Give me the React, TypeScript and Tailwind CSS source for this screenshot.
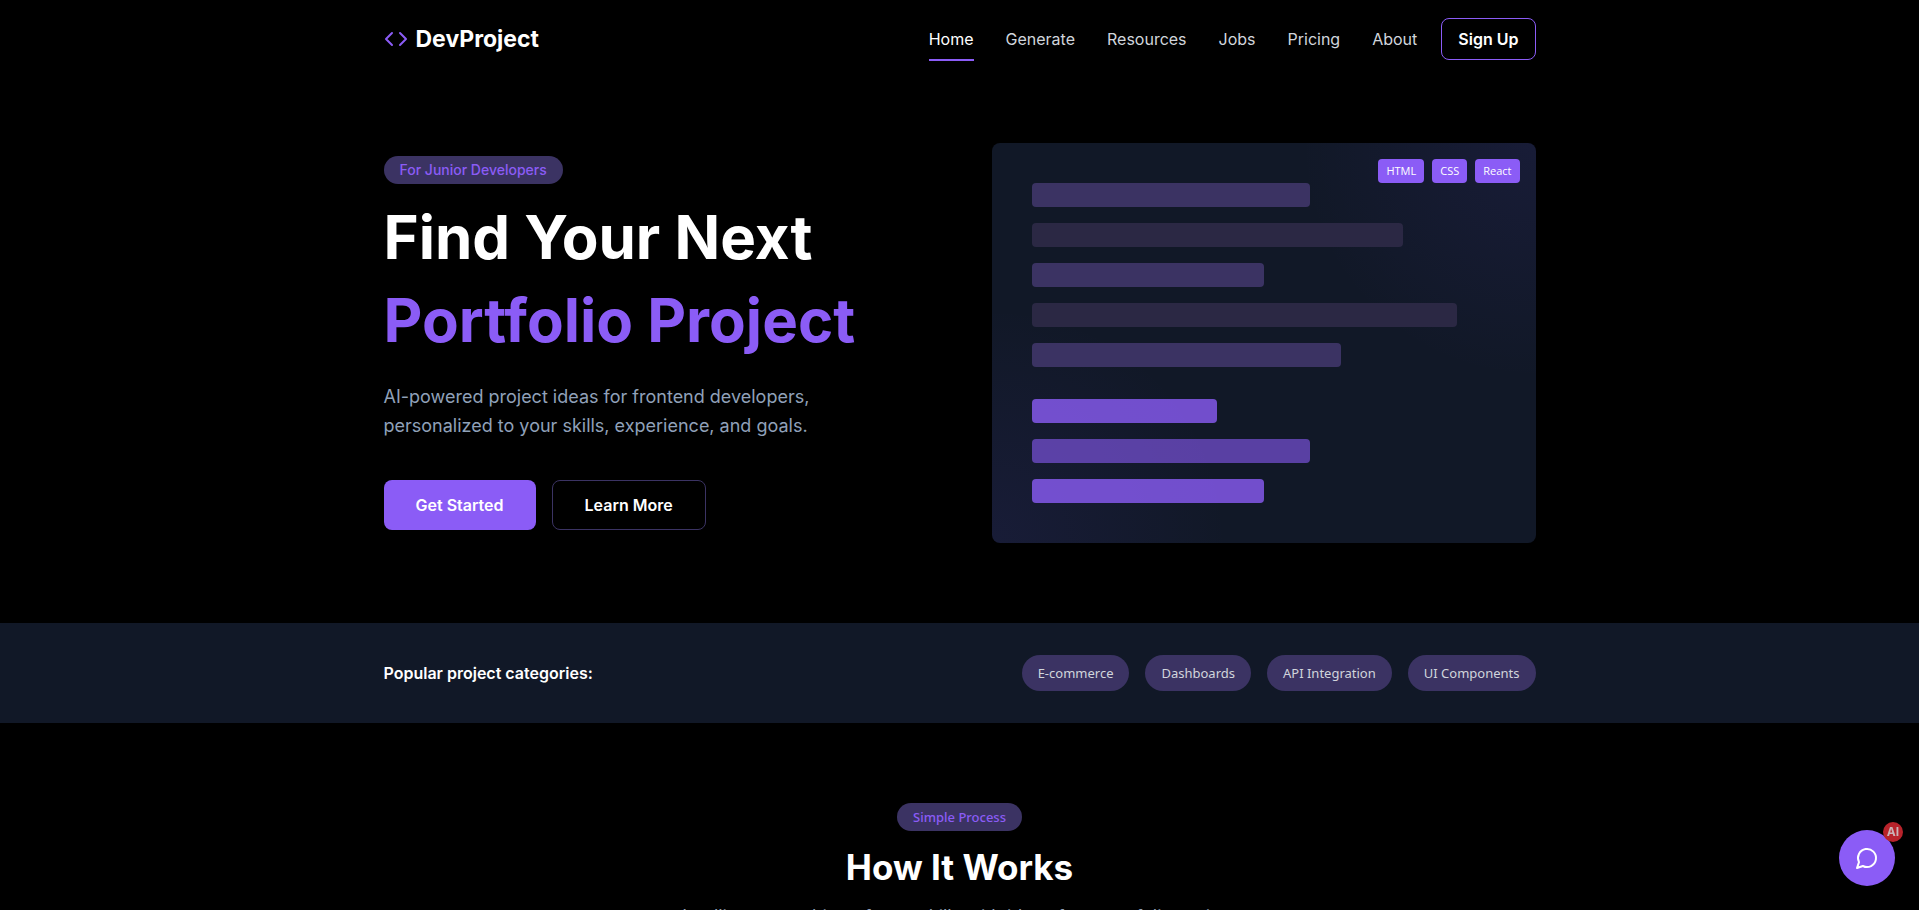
import { clsx } from "clsx";

const navItems = ["Home", "Generate", "Resources", "Jobs", "Pricing", "About"];

const codeBlocks = [
  [
    "w-3/5 bg-[#3b3363]",
    "w-4/5 bg-[#2b2844]",
    "w-1/2 bg-[#3b3363]",
    "w-11/12 bg-[#2b2844]",
    "w-2/3 bg-[#3b3363]",
  ],
  ["w-2/5 bg-[#8b5cf6]/80", "w-3/5 bg-[#8b5cf6]/60", "w-1/2 bg-[#8b5cf6]/80"],
];

const technologies = ["HTML", "CSS", "React"];
const categories = ["E-commerce", "Dashboards", "API Integration", "UI Components"];

function CodeIcon() {
  return (
    <svg
      className="size-6 text-[#8b5cf6]"
      viewBox="0 0 24 24"
      fill="none"
      stroke="currentColor"
      strokeWidth="2"
      strokeLinecap="round"
      strokeLinejoin="round"
      aria-hidden="true"
    >
      <polyline points="16 18 22 12 16 6" />
      <polyline points="8 6 2 12 8 18" />
    </svg>
  );
}

function ChatIcon() {
  return (
    <svg
      className="size-6"
      viewBox="0 0 24 24"
      fill="none"
      stroke="currentColor"
      strokeWidth="2"
      strokeLinecap="round"
      strokeLinejoin="round"
      aria-hidden="true"
    >
      <path d="M7.9 20A9 9 0 1 0 4 16.1L2 22Z" />
    </svg>
  );
}

function Header() {
  return (
    <header className="border-b border-black">
      <div className="mx-auto flex h-[78px] max-w-[1200px] items-center justify-between px-6">
        <a href="#" className="flex items-center gap-2">
          <CodeIcon />
          <span className="text-[23px] leading-8 font-bold">DevProject</span>
        </a>
        <div className="flex items-center gap-6">
          <nav className="flex items-center gap-8">
            {navItems.map((item, i) => (
              <a
                key={item}
                href={`#${item.toLowerCase()}`}
                className={clsx(
                  "border-b-2 pt-2.5 pb-2 leading-6",
                  i === 0 ? "border-[#8b5cf6] text-white" : "border-transparent text-gray-300",
                )}
              >
                {item}
              </a>
            ))}
          </nav>
          <button
            type="button"
            className="rounded-lg border border-[#8b5cf6] px-4 py-2 leading-6 font-semibold"
          >
            Sign Up
          </button>
        </div>
      </div>
    </header>
  );
}

function CodePreview() {
  return (
    <div className="relative flex h-[400px] flex-col gap-8 rounded-lg bg-[#111827] bg-[radial-gradient(circle_at_top_right,#6d4cf614,transparent_35%),radial-gradient(circle_at_bottom_left,#6d4cf614,transparent_35%)] p-10">
      {codeBlocks.map((block, i) => (
        <div key={i} className="flex flex-col gap-4">
          {block.map((line, j) => (
            <div key={j} className={clsx("h-6 rounded-sm", line)} />
          ))}
        </div>
      ))}
      <ul className="absolute top-4 right-4 flex gap-2">
        {technologies.map((name) => (
          <li
            key={name}
            className="rounded-sm bg-[#8b5cf6] px-2 py-1 font-['Open_Sans',sans-serif] text-[11px] leading-4"
          >
            {name}
          </li>
        ))}
      </ul>
    </div>
  );
}

function Hero() {
  return (
    <section className="mx-auto grid max-w-[1200px] grid-cols-2 items-center gap-16 px-6 pt-16 pb-20">
      <div className="flex flex-col items-start">
        <span className="rounded-full bg-[#3b3363] px-4 py-1 text-sm font-medium text-[#8b5cf6]">
          For Junior Developers
        </span>
        <h1 className="mt-3 text-[60px] leading-[83px] font-bold whitespace-nowrap">
          Find Your Next
          <span className="block text-[#8b5cf6]">Portfolio Project</span>
        </h1>
        <p className="mt-5 text-lg leading-[29px] text-slate-400">
          AI-powered project ideas for frontend developers,
          <br />
          personalized to your skills, experience, and goals.
        </p>
        <div className="mt-10 flex gap-4">
          <button type="button" className="rounded-lg bg-[#8b5cf6] px-8 py-3 leading-6 font-semibold">
            Get Started
          </button>
          <button
            type="button"
            className="rounded-lg border border-[#3b3363] px-8 py-3 leading-6 font-semibold"
          >
            Learn More
          </button>
        </div>
      </div>
      <CodePreview />
    </section>
  );
}

function Categories() {
  return (
    <section className="bg-[#111827]">
      <div className="mx-auto flex max-w-[1200px] items-center justify-between px-6 py-8">
        <h2 className="font-semibold">Popular project categories:</h2>
        <ul className="flex gap-4">
          {categories.map((name) => (
            <li
              key={name}
              className="rounded-full bg-[#3b3363] px-4 py-2 font-['Noto_Sans',sans-serif] text-[13px] leading-5 text-gray-300"
            >
              {name}
            </li>
          ))}
        </ul>
      </div>
    </section>
  );
}

function HowItWorks() {
  return (
    <section className="flex flex-col items-center px-6 py-20 text-center">
      <span className="rounded-full bg-[#3b3363] px-4 py-1 font-['Noto_Sans',sans-serif] text-[13px] leading-5 font-medium text-[#8b5cf6]">
        Simple Process
      </span>
      <h2 className="mt-4 text-[35px] leading-10 font-bold">How It Works</h2>
      <p className="mt-4 text-lg leading-7 text-slate-400">
        Intelligent matching of your skills with ideas for a portfolio project
      </p>
    </section>
  );
}

export default function App() {
  return (
    <div className="min-h-screen bg-black font-['Inter',sans-serif] text-white">
      <Header />
      <main>
        <Hero />
        <Categories />
        <HowItWorks />
      </main>
      <button
        type="button"
        aria-label="Open AI chat"
        className="fixed right-6 bottom-6 flex size-14 items-center justify-center rounded-full bg-[#8b5cf6]"
      >
        <ChatIcon />
        <span className="absolute -top-2 -right-2 flex size-5 items-center justify-center rounded-full bg-[#b8232b] text-xs font-bold text-[#cbb3b6]">
          AI
        </span>
      </button>
    </div>
  );
}
